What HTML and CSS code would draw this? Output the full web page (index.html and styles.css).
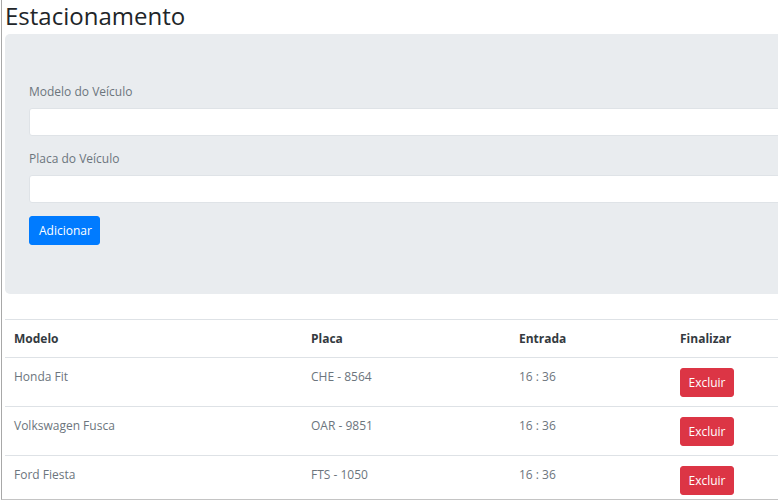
FILE: index.html
```html
<!DOCTYPE html>
<html lang="pt-BR">
<head>
<meta charset="utf-8">
<title>Estacionamento</title>
<link rel="stylesheet" href="styles.css">
</head>
<body>
<div class="frame"></div>
<main class="page">
  <h1 class="title">Estacionamento</h1>
  <section class="jumbotron">
    <div class="form-group">
      <label class="label" for="modelo">Modelo do Veículo</label>
      <input class="input" id="modelo" type="text">
    </div>
    <div class="form-group">
      <label class="label" for="placa">Placa do Veículo</label>
      <input class="input" id="placa" type="text">
    </div>
    <button class="btn btn-primary" type="button">Adicionar</button>
  </section>
  <table class="table">
    <thead>
      <tr>
        <th class="col-modelo">Modelo</th>
        <th class="col-placa">Placa</th>
        <th class="col-entrada">Entrada</th>
        <th class="col-final">Finalizar</th>
      </tr>
    </thead>
    <tbody>
      <tr>
        <td>Honda Fit</td>
        <td>CHE - 8564</td>
        <td>16 : 36</td>
        <td><button class="btn btn-danger" type="button">Excluir</button></td>
      </tr>
      <tr>
        <td>Volkswagen Fusca</td>
        <td>OAR - 9851</td>
        <td>16 : 36</td>
        <td><button class="btn btn-danger" type="button">Excluir</button></td>
      </tr>
      <tr>
        <td>Ford Fiesta</td>
        <td>FTS - 1050</td>
        <td>16 : 36</td>
        <td><button class="btn btn-danger" type="button">Excluir</button></td>
      </tr>
    </tbody>
  </table>
</main>
</body>
</html>
```

FILE: styles.css
```css
html, body {
  margin: 0;
  padding: 0;
  overflow: hidden;
  background: #fff;
}
body {
  font-family: "Open Sans", "Noto Sans", "Liberation Sans", sans-serif;
  font-size: 12px;
  line-height: 18px;
  color: #212529;
}
.frame {
  position: fixed;
  left: 1px;
  top: 0;
  width: 1000px;
  height: 499px;
  border-left: 1px solid #a8a8a8;
  border-bottom: 1px solid #c4c4c4;
  pointer-events: none;
  z-index: 5;
}
.page {
  width: 1000px;
  padding-left: 5px;
}
.title {
  margin: 0 0 3px 0;
  padding-top: 1px;
  font-size: 24px;
  line-height: 30px;
  font-weight: 400;
  color: #212529;
}
.jumbotron {
  background: #e9ecef;
  border-radius: 5px;
  padding: 49px 24px 49px 24px;
  margin-bottom: 25px;
}
.form-group {
  display: flex;
  flex-direction: column;
  margin-bottom: 14px;
}
.form-group + .form-group {
  margin-bottom: 13px;
}
.label {
  color: #6c757d;
  margin-bottom: 7px;
}
.input {
  height: 28px;
  box-sizing: border-box;
  border: 1px solid #dfe3e7;
  border-radius: 3px;
  background: #fff;
  padding: 4px 9px;
  font: inherit;
}
.btn {
  display: block;
  height: 29px;
  box-sizing: border-box;
  border: 1px solid transparent;
  border-radius: 3px;
  padding: 0 9px;
  font: inherit;
  color: #fff;
  cursor: pointer;
}
.btn-primary {
  background: #007bff;
  border-color: #007bff;
  width: 71px;
}
.btn-danger {
  background: #dc3545;
  border-color: #dc3545;
  width: 54px;
  padding: 0;
}
.table {
  width: 1000px;
  border-collapse: collapse;
}
.table th, .table td {
  text-align: left;
  vertical-align: top;
  border-top: 1px solid #dee2e6;
  padding: 10px 9px 9px 9px;
}
.table th {
  font-weight: 700;
  color: #343a40;
}
.table thead th {
  border-bottom: 1px solid #dee2e6;
}
.table td {
  color: #6c757d;
  height: 29px;
}
.col-modelo { width: 279px; }
.col-placa { width: 190px; }
.col-entrada { width: 143px; }
.col-final { width: auto; }
```
